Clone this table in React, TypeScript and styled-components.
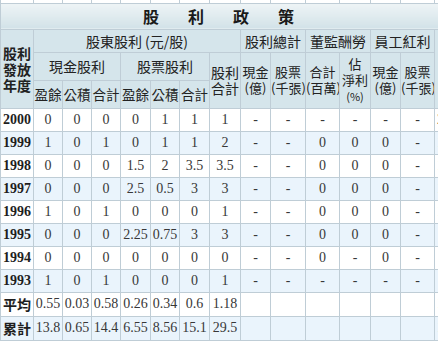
import React from "react";
import styled, { createGlobalStyle } from "styled-components";

const Global = createGlobalStyle`
  html, body { margin: 0; padding: 0; background: #fff; overflow: hidden; }
  body { width: 438px; height: 343px; }
`;

const CJK = `"Noto Sans CJK TC", "Noto Sans CJK SC", sans-serif`;
const SERIF = `"Liberation Serif", "Times New Roman", serif`;
const LINE = "#bfcdd6";

const Table = styled.table`
  border-collapse: collapse;
  table-layout: fixed;
  width: 474px;
  color: #2a2a2a;
`;

const SliverRow = styled.tr`
  height: 3px;
`;

const SliverCell = styled.td`
  padding: 0;
  height: 2px;
  line-height: 0;
  font-size: 0;
  border-left: 1px solid ${LINE};
  border-right: 1px solid ${LINE};
  border-bottom: 1px solid ${LINE};
  background: #fff;
`;

const TitleRow = styled.tr`
  height: 26px;
`;

const TitleCell = styled.th`
  padding: 0 38px 0 0;
  border: 1px solid ${LINE};
  background: linear-gradient(#eef4f6, #d2e2e8);
`;

const TitleText = styled.span`
  display: inline-flex;
  gap: 29px;
  font-family: ${CJK};
  font-weight: 700;
  font-size: 16px;
  line-height: 20px;
  color: #1a1a1a;
  vertical-align: middle;
`;

const HeadRow = styled.tr<{ $h: number }>`
  height: ${(p) => p.$h}px;
`;

const HeadCell = styled.th<{ $bold?: boolean; $lh?: number; $fs?: number }>`
  padding: 0;
  border: 1px solid ${LINE};
  background: #d5e5eb;
  font-family: ${CJK};
  font-weight: ${(p) => (p.$bold ? 700 : 400)};
  font-size: ${(p) => p.$fs ?? 14}px;
  line-height: ${(p) => p.$lh ?? 16}px;
  color: #222;
  text-align: center;
  vertical-align: middle;
  white-space: nowrap;
  overflow: hidden;
`;

const Small = styled.span`
  font-size: 11px;
`;

const DataRow = styled.tr<{ $alt: boolean; $h: number }>`
  height: ${(p) => p.$h}px;
  background: ${(p) => (p.$alt ? "#eaf4fc" : "#ffffff")};
`;

const LabelCell = styled.td<{ $cjk?: boolean }>`
  padding: 0 0 0 2px;
  border: 1px solid ${LINE};
  font-family: ${(p) => (p.$cjk ? CJK : SERIF)};
  font-weight: 700;
  font-size: 14px;
  line-height: 16px;
  color: #1e1e1e;
  text-align: left;
  white-space: nowrap;
  overflow: hidden;
`;

const DataCell = styled.td<{ $left?: boolean }>`
  padding: ${(p) => (p.$left ? "0 0 0 2px" : "0")};
  border: 1px solid ${LINE};
  font-family: ${SERIF};
  font-size: 14px;
  line-height: 16px;
  color: #383838;
  text-align: ${(p) => (p.$left ? "left" : "center")};
  white-space: nowrap;
  overflow: hidden;
`;

const widths = [33, 29, 29, 29, 30, 29, 30, 31, 30, 35, 34, 31, 30, 34, 40];

type Row = { label: string; cjk?: boolean; values: string[]; h: number };

const rows: Row[] = [
  { label: "2000", values: ["0", "0", "0", "0", "1", "1", "1", "-", "-", "-", "-", "-", "-", "2"], h: 23 },
  { label: "1999", values: ["1", "0", "1", "0", "1", "1", "2", "-", "-", "0", "0", "0", "-", "1"], h: 23 },
  { label: "1998", values: ["0", "0", "0", "1.5", "2", "3.5", "3.5", "-", "-", "0", "0", "0", "-", "1"], h: 23 },
  { label: "1997", values: ["0", "0", "0", "2.5", "0.5", "3", "3", "-", "-", "0", "0", "0", "-", "1"], h: 23 },
  { label: "1996", values: ["1", "0", "1", "0", "0", "0", "1", "-", "-", "0", "0", "0", "-", "1"], h: 23 },
  { label: "1995", values: ["0", "0", "0", "2.25", "0.75", "3", "3", "-", "-", "0", "0", "0", "-", ""], h: 23 },
  { label: "1994", values: ["0", "0", "0", "0", "0", "0", "0", "-", "-", "0", "-", "0", "-", ""], h: 23 },
  { label: "1993", values: ["1", "0", "1", "0", "0", "0", "1", "-", "-", "-", "-", "-", "-", ""], h: 23 },
  { label: "平均", cjk: true, values: ["0.55", "0.03", "0.58", "0.26", "0.34", "0.6", "1.18", "", "", "", "", "", "", "1"], h: 24 },
  { label: "累計", cjk: true, values: ["13.8", "0.65", "14.4", "6.55", "8.56", "15.1", "29.5", "", "", "", "", "", "", "1"], h: 24 },
];

export default function App() {
  return (
    <>
      <Global />
      <Table>
        <colgroup>
          {widths.map((w, i) => (
            <col key={i} style={{ width: w }} />
          ))}
        </colgroup>
        <tbody>
          <SliverRow>
            {widths.map((_, i) => (
              <SliverCell key={i} />
            ))}
          </SliverRow>
          <TitleRow>
            <TitleCell colSpan={15}>
              <TitleText>
                <span>股</span>
                <span>利</span>
                <span>政</span>
                <span>策</span>
              </TitleText>
            </TitleCell>
          </TitleRow>
          <HeadRow $h={23}>
            <HeadCell rowSpan={3} $bold $lh={16}>
              股利
              <br />
              發放
              <br />
              年度
            </HeadCell>
            <HeadCell colSpan={7}>股東股利 (元/股)</HeadCell>
            <HeadCell colSpan={2}>股利總計</HeadCell>
            <HeadCell colSpan={2}>董監酬勞</HeadCell>
            <HeadCell colSpan={2}>員工紅利</HeadCell>
            <HeadCell rowSpan={3} $lh={16}>
              股利
              <br />
              年度
            </HeadCell>
          </HeadRow>
          <HeadRow $h={28}>
            <HeadCell colSpan={3}>現金股利</HeadCell>
            <HeadCell colSpan={3}>股票股利</HeadCell>
            <HeadCell rowSpan={2}>
              股利
              <br />
              合計
            </HeadCell>
            <HeadCell rowSpan={2} $fs={13}>
              現金
              <br />
              (億)
            </HeadCell>
            <HeadCell rowSpan={2} $fs={13}>
              股票
              <br />
              (千張)
            </HeadCell>
            <HeadCell rowSpan={2} $fs={13}>
              合計
              <br />
              (百萬)
            </HeadCell>
            <HeadCell rowSpan={2} $fs={13} $lh={16}>
              佔
              <br />
              淨利
              <br />
              <Small>(%)</Small>
            </HeadCell>
            <HeadCell rowSpan={2} $fs={13}>
              現金
              <br />
              (億)
            </HeadCell>
            <HeadCell rowSpan={2} $fs={13}>
              股票
              <br />
              (千張)
            </HeadCell>
          </HeadRow>
          <HeadRow $h={28}>
            <HeadCell $fs={13.5}>盈餘</HeadCell>
            <HeadCell $fs={13.5}>公積</HeadCell>
            <HeadCell $fs={13.5}>合計</HeadCell>
            <HeadCell $fs={13.5}>盈餘</HeadCell>
            <HeadCell $fs={13.5}>公積</HeadCell>
            <HeadCell $fs={13.5}>合計</HeadCell>
          </HeadRow>
          {rows.map((r, i) => (
            <DataRow key={r.label} $alt={i % 2 === 1} $h={r.h}>
              <LabelCell $cjk={r.cjk}>{r.label}</LabelCell>
              {r.values.map((v, j) => (
                <DataCell key={j} $left={j === r.values.length - 1}>
                  {v}
                </DataCell>
              ))}
            </DataRow>
          ))}
        </tbody>
      </Table>
    </>
  );
}
